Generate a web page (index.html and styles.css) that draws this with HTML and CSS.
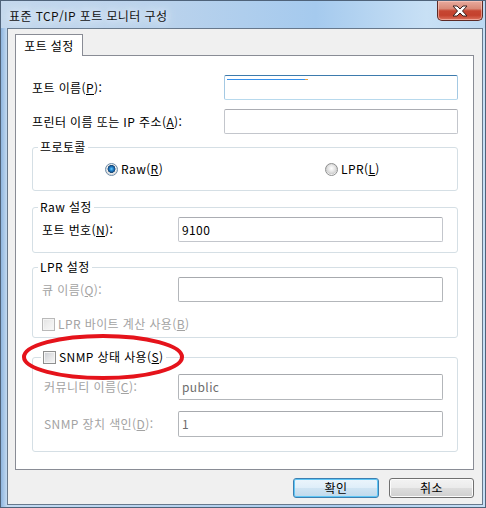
FILE: index.html
```html
<!DOCTYPE html>
<html lang="ko">
<head>
<meta charset="utf-8">
<title>표준 TCP/IP 포트 모니터 구성</title>
<link rel="stylesheet" href="styles.css">
</head>
<body>
<div class="window">
  <div class="titlebar">
    <span class="title">표준 TCP/IP 포트 모니터 구성</span>
    <div class="close">
      <svg width="16" height="12" viewBox="0 0 16 12"><path d="M1,1 h4 l3,3 l3,-3 h4 l-4.5,5 l4.5,5 h-4 l-3,-3 l-3,3 h-4 l4.5,-5 z" fill="#ffffff" stroke="#3a2220" stroke-width="1" stroke-linejoin="round"/></svg>
    </div>
  </div>
  <div class="client">
    <div class="tabs"><div class="tab">포트 설정</div></div>
    <div class="panel">
      <div class="row">
        <span class="label top-label">포트 이름(<u>P</u>):</span>
        <div class="field wide focused"><span class="glint"></span></div>
      </div>
      <div class="row row2">
        <span class="label top-label">프린터 이름 또는 IP 주소(<u>A</u>):</span>
        <div class="field wide"></div>
      </div>

      <fieldset class="group proto">
        <legend>프로토콜</legend>
        <div class="radios">
          <span class="opt first"><span class="radio on"></span>Raw(<u>R</u>)</span>
          <span class="opt"><span class="radio"></span>LPR(<u>L</u>)</span>
        </div>
      </fieldset>

      <fieldset class="group raw">
        <legend>Raw 설정</legend>
        <div class="gbody raw-body">
          <div class="row">
            <span class="label glabel">포트 번호(<u>N</u>):</span>
            <div class="field narrow"><span class="val">9100</span></div>
          </div>
        </div>
      </fieldset>

      <fieldset class="group lpr">
        <legend>LPR 설정</legend>
        <div class="gbody lpr-body">
          <div class="row">
            <span class="label glabel dis">큐 이름(<u>Q</u>):</span>
            <div class="field narrow disabled"></div>
          </div>
          <div class="check-row dis">
            <span class="check disabled"></span>LPR 바이트 계산 사용(<u>B</u>)
          </div>
        </div>
      </fieldset>

      <fieldset class="group snmp">
        <legend class="snmp-legend"><span class="check"></span>SNMP 상태 사용(<u>S</u>)</legend>
        <div class="gbody snmp-body">
          <div class="row">
            <span class="label glabel slabel dis">커뮤니티 이름(<u>C</u>):</span>
            <div class="field narrow tall disabled"><span class="val grey">public</span></div>
          </div>
          <div class="row row-snmp2">
            <span class="label glabel slabel dis">SNMP 장치 색인(<u>D</u>):</span>
            <div class="field narrow tall disabled"><span class="val grey">1</span></div>
          </div>
        </div>
      </fieldset>
    </div>
    <div class="buttons">
      <div class="btn default">확인</div>
      <div class="btn">취소</div>
    </div>
  </div>
  <svg class="annotation" width="168" height="54" viewBox="0 0 168 54"><ellipse cx="84" cy="27" rx="79" ry="21" fill="none" stroke="#e5131b" stroke-width="4"/></svg>
</div>
</body>
</html>
```

FILE: styles.css
```css
* { box-sizing: border-box; }
html, body { margin: 0; padding: 0; }
body {
  width: 486px;
  height: 508px;
  overflow: hidden;
  font-family: "Noto Sans CJK KR", "Noto Sans", sans-serif;
  font-size: 12px;
  line-height: 16px;
  letter-spacing: 0.4px;
  color: #000;
}
.window {
  position: relative;
  width: 486px;
  height: 508px;
  border: 1px solid #4f637a;
  background: linear-gradient(to right, #8fb6e0 0, #c3daf1 6px, #b6d2ee 40%, #aacdef 70%, #c6dff5 100%);
}
.titlebar {
  height: 27px;
  display: flex;
  justify-content: space-between;
  align-items: flex-start;
  background: linear-gradient(to right, #c4d8ed 0%, #b9d2ec 35%, #a5caee 65%, #c8e0f5 88%, #bcd8f2 100%);
}
.title {
  padding: 7px 0 0 8px;
  color: #111;
  text-shadow: 0 0 6px #e6eff9, 0 0 10px #e6eff9, 0 0 14px #dfeaf6;
}
.close {
  width: 46px;
  height: 20px;
  margin-right: 2px;
  border: 1px solid #5c2a26;
  border-top: none;
  border-radius: 0 0 5px 5px;
  background: linear-gradient(#e8ab9e 0%, #d98a78 40%, #c64632 52%, #c4412d 75%, #dc725e 100%);
  box-shadow: inset 0 0 0 1px rgba(255, 210, 200, 0.55);
  display: flex;
  align-items: center;
  justify-content: center;
}
.client {
  width: 476px;
  height: 477px;
  margin-left: 6px;
  border: 1px solid #67788c;
  background: #f0f0f0;
  padding: 5px 8px 0 7px;
}
.tabs { display: flex; }
.tab {
  position: relative;
  z-index: 1;
  width: 68px;
  height: 22px;
  margin-bottom: -1px;
  border: 1px solid #898c95;
  border-bottom: none;
  background: #fff;
  text-align: center;
  padding-top: 3px;
}
.panel {
  width: 459px;
  height: 415px;
  border: 1px solid #898c95;
  background: #fff;
  padding: 19px 15px 0 16px;
}
.row {
  display: flex;
  align-items: center;
}
.row2 { margin-top: 9px; }
.label { flex: none; }
.top-label { width: 192px; }
.glabel { width: 136px; }
.slabel { width: 134px; margin-left: 2px; }
.dis { color: #a3a3a3; }
.field {
  height: 25px;
  border: 1px solid #c3c6cc;
  border-top-color: #abadb3;
  border-radius: 2px;
  background: #fff;
  display: flex;
  align-items: center;
}
.field.wide { width: 235px; }
.field.narrow { width: 265px; }
.field.tall { height: 26px; }
.field.focused {
  border-color: #a4c9e3;
  border-top-color: #3d7bad;
  border-bottom-color: #b7d9ed;
  align-items: flex-start;
}
.field.disabled { border-color: #b3b6ba; border-top-color: #a7aaae; }
.glint {
  display: block;
  width: 81px;
  height: 1px;
  margin: 3px 0 0 2px;
  background: linear-gradient(to right, #3590ec 96%, #f0a040 96%);
}
.val { padding-left: 3px; }
.val.grey { color: #6d6d6d; }

.group {
  margin: 0;
  padding: 0;
  min-width: 0;
  width: 426px;
  border: 1px solid #d5dfe5;
  border-radius: 3px;
}
.group legend {
  margin-left: 5px;
  padding: 0 2px;
  line-height: 16px;
}
.proto { margin-top: 5px; }
.raw { margin-top: 8px; }
.lpr { margin-top: 6px; }
.snmp { margin-top: 11px; }
.radios {
  display: flex;
  padding: 6px 0 13px 72px;
}
.opt { display: flex; align-items: center; }
.opt.first { width: 220px; }
.radio {
  width: 13px;
  height: 13px;
  margin-right: 3px;
  border: 1px solid #8e8f8f;
  border-radius: 50%;
  background: radial-gradient(circle at 50% 40%, #ffffff 0, #e8e8e8 3px, #d0d0d0 5.5px, #f2f2f2 6px);
}
.radio.on {
  border-color: #6f8da8;
  background: radial-gradient(circle at 50% 45%, #6fd0ff 0, #2a8fd6 1.5px, #124f8c 3.3px, #2a4f70 3.8px, #f4f4f4 4.2px, #d8d8d8 5.5px, #eeeeee 6px);
}
.gbody { padding-left: 9px; }
.raw-body { padding-top: 2px; padding-bottom: 10px; }
.lpr-body { padding-top: 2px; padding-bottom: 5px; }
.snmp-body { padding-top: 9px; padding-bottom: 14px; }
.row-snmp2 { margin-top: 11px; }
.check-row {
  display: flex;
  align-items: center;
  margin-top: 14px;
}
.check {
  flex: none;
  width: 13px;
  height: 13px;
  margin-right: 3px;
  border: 1px solid #8e8f8f;
  background: linear-gradient(135deg, #c9ccd2 0%, #e3e4e6 50%, #f7f7f7 100%);
  box-shadow: inset 0 0 0 1px #f4f4f4;
}
.check.disabled {
  border-color: #b9b9b9;
  background: linear-gradient(135deg, #e2e2e2 0%, #efefef 50%, #f8f8f8 100%);
}
.snmp-legend {
  display: flex;
  align-items: center;
}
.group .snmp-legend { margin-left: 8px; padding: 0 2px 0 2px; }

.buttons {
  display: flex;
  justify-content: flex-end;
  gap: 10px;
  margin-top: 8px;
}
.btn {
  width: 85px;
  height: 20px;
  border: 1px solid #707070;
  border-radius: 3px;
  background: linear-gradient(#f3f3f3 0%, #ebebeb 48%, #dddddd 52%, #cfcfcf 100%);
  box-shadow: inset 0 0 0 1px #fcfcfc;
  text-align: center;
  line-height: 17px;
}
.btn.default {
  width: 86px;
  border-color: #3c7fb1;
  background: linear-gradient(#ebf5fc 0%, #dfeef9 48%, #cfe4f3 52%, #bfd9ec 100%);
  box-shadow: inset 0 0 0 1px #5fc6f5;
}
.annotation {
  position: absolute;
  left: 18px;
  top: 329px;
}
```
